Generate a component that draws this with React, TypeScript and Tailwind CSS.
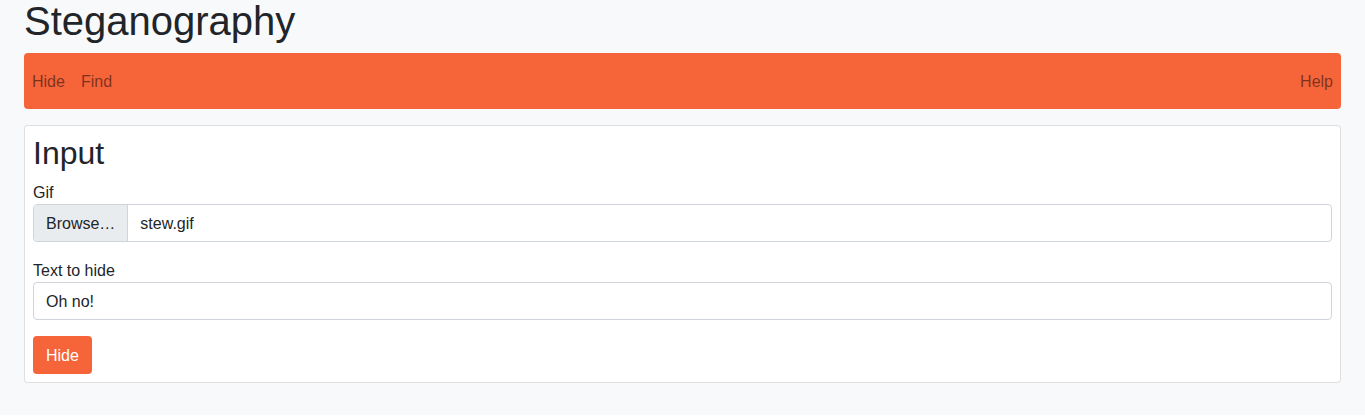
const navLinks = ["Hide", "Find"];

const App = () => {
  return (
    <div className="min-h-[418px] bg-[#f8f9fa] px-6 font-['Liberation_Sans',Arial,sans-serif] text-[#212529]">
      <h1 className="text-[40px] leading-[48px] -mt-[3px] mb-2">Steganography</h1>
      <nav className="flex h-14 items-center justify-between rounded bg-[#f6643a] px-2 pt-[2px] text-base text-black/50">
        <div className="flex gap-4">
          {navLinks.map((link) => (
            <span key={link} className="cursor-pointer">
              {link}
            </span>
          ))}
        </div>
        <span className="cursor-pointer">Help</span>
      </nav>
      <div className="mt-4 rounded border border-black/[0.125] bg-white p-2">
        <h2 className="mb-2 pt-px text-[32px] leading-[37px]">Input</h2>
        <label className="block pt-px text-base leading-[23px]">Gif</label>
        <div className="mb-4 flex h-[38px] rounded border border-[#ced4da] text-base">
          <span className="flex items-center rounded-l border-r border-[#ced4da] bg-[#e9ecef] px-3 pt-[2px]">
            Browse…
          </span>
          <span className="flex items-center px-3 pt-[2px]">stew.gif</span>
        </div>
        <label className="block pt-px text-base leading-[23px]">Text to hide</label>
        <input
          className="mb-4 block h-[38px] w-full rounded border border-[#ced4da] px-3 pt-[2px] text-base text-[#212529] outline-none"
          defaultValue="Oh no!"
        />
        <button className="h-[38px] rounded bg-[#f6643a] px-[13px] pt-[2px] text-base text-white">
          Hide
        </button>
      </div>
    </div>
  );
};

export default App;
